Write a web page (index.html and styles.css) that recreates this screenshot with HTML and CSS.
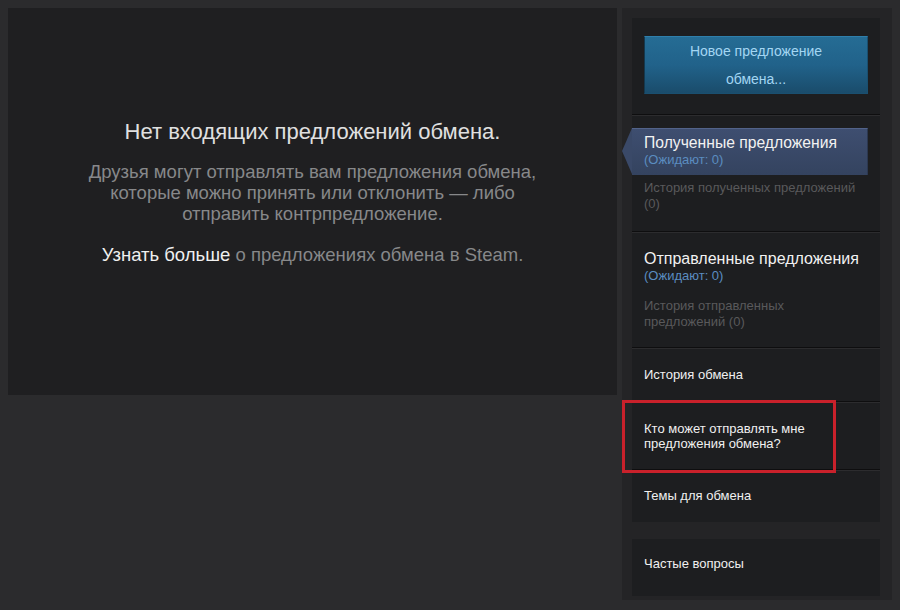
FILE: index.html
```html
<!DOCTYPE html>
<html lang="ru">
<head>
<meta charset="utf-8">
<link rel="stylesheet" href="styles.css">
</head>
<body>
<div class="page">
  <main class="main">
    <h1 class="empty-title">Нет входящих предложений обмена.</h1>
    <p class="empty-text">Друзья могут отправлять вам предложения обмена,<br>которые можно принять или отклонить — либо<br>отправить контрпредложение.</p>
    <p class="empty-more"><span class="more-link">Узнать больше</span> о предложениях обмена в Steam.</p>
  </main>
  <aside class="side">
    <div class="side-block">
      <div class="btn-wrap">
        <div class="new-btn">Новое предложение<br>обмена...</div>
      </div>
      <div class="sep"></div>
      <div class="sec sec-received">
        <div class="tab-active">
          <div class="tab-title">Полученные предложения</div>
          <div class="tab-pending">(Ожидают: 0)</div>
        </div>
        <div class="hist">История полученных предложений<br>(0)</div>
      </div>
      <div class="sep"></div>
      <div class="sec sec-sent">
        <div class="tab-title">Отправленные предложения</div>
        <div class="tab-pending">(Ожидают: 0)</div>
        <div class="hist hist-sent">История отправленных<br>предложений (0)</div>
      </div>
      <div class="sep"></div>
      <div class="sec link-sec link-hist">История обмена</div>
      <div class="sep"></div>
      <div class="sec link-sec link-who">Кто может отправлять мне<br>предложения обмена?</div>
      <div class="sep"></div>
      <div class="sec link-sec link-topics">Темы для обмена</div>
    </div>
    <div class="side-block faq">
      <div class="link-sec">Частые вопросы</div>
    </div>
    <div class="highlight"></div>
  </aside>
</div>
</body>
</html>
```

FILE: styles.css
```css
html, body {
  margin: 0;
  padding: 0;
  background: #2b2b2d;
  font-family: "Liberation Sans", Arial, sans-serif;
}

.page {
  display: flex;
  align-items: flex-start;
  padding: 8px 0 0 8px;
  height: 602px;
  box-sizing: border-box;
}

.main {
  width: 609px;
  height: 387px;
  background: #1f1f21;
  text-align: center;
  padding-top: 111px;
  box-sizing: border-box;
}

.empty-title {
  margin: 0;
  font-size: 22px;
  line-height: 26px;
  font-weight: normal;
  color: #e0e0e0;
}

.empty-text {
  margin: 16px 0 0;
  font-size: 18.5px;
  line-height: 21px;
  color: #87888a;
}

.empty-more {
  margin: 20px 0 0;
  font-size: 18.5px;
  line-height: 21px;
  color: #87888a;
}

.more-link {
  color: #f0f0f0;
}

.side {
  position: relative;
  margin-left: 5px;
  width: 270px;
  height: 592px;
  background: #242426;
  padding: 10px 12px 3px 10px;
  box-sizing: border-box;
  display: flex;
  flex-direction: column;
}

.side-block {
  background: #1d1e20;
}

.faq {
  margin-top: 17px;
  padding: 17px 12px 24px;
}

.btn-wrap {
  padding: 18px 12px 20px;
}

.new-btn {
  height: 56px;
  border: 1px solid #1a4f6f;
  border-top-color: #2f7fab;
  border-left-color: #14394f;
  background: linear-gradient(to bottom, #256c94 0%, #21628a 50%, #1a4c6b 100%);
  color: #a3d6f3;
  font-size: 14px;
  line-height: 28px;
  text-align: center;
}

.sep {
  height: 0;
  border-top: 1px solid #0e0e0f;
  border-bottom: 1px solid #2c2c2e;
}

.sec {
  padding-left: 12px;
}

.sec-received {
  padding: 12px 0 19px;
}

.tab-active {
  position: relative;
  margin-right: 12px;
  height: 47px;
  box-sizing: border-box;
  padding: 5px 0 0 12px;
  background: linear-gradient(to bottom, #3e4e70, #34435f);
  border-top: 1px solid #52638a;
  border-right: 1px solid #2c3850;
}

.tab-active::before {
  content: "";
  position: absolute;
  left: -10px;
  top: -1px;
  width: 0;
  height: 0;
  border-top: 23.5px solid transparent;
  border-bottom: 23.5px solid transparent;
  border-right: 10px solid #3a4968;
}

.tab-title {
  font-size: 15.7px;
  line-height: 18px;
  color: #f2f2f2;
}

.tab-pending {
  font-size: 13px;
  line-height: 16px;
  color: #5b8dc0;
}

.hist {
  margin-top: 5px;
  padding-left: 12px;
  font-size: 13px;
  line-height: 16px;
  color: #59595b;
}

.sec-sent {
  padding-top: 17px;
  padding-bottom: 17px;
}

.sec-sent .tab-title {
  font-size: 16px;
}

.hist-sent {
  margin-top: 14px;
  padding-left: 0;
}

.link-sec {
  font-size: 13px;
  line-height: 16px;
  color: #f0f0f0;
}

.link-hist {
  padding-top: 18px;
  padding-bottom: 18px;
}

.link-who {
  line-height: 15px;
  padding-top: 18px;
  padding-bottom: 18px;
}

.link-topics {
  padding-top: 17px;
  padding-bottom: 18px;
}

.highlight {
  position: absolute;
  left: 0;
  top: 392px;
  width: 214px;
  height: 73px;
  box-sizing: border-box;
  border: 3px solid #c9212b;
}
```
